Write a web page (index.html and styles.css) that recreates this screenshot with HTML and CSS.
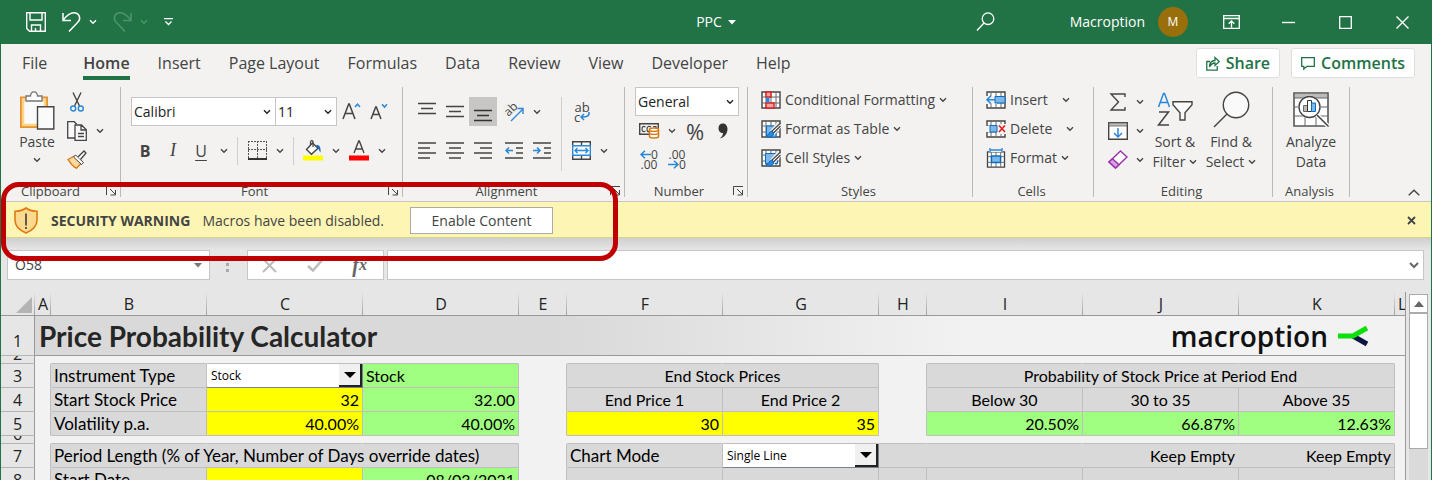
FILE: index.html
```html
<!DOCTYPE html>
<html lang="en">
<head>
<meta charset="utf-8">
<title>PPC</title>
<link rel="stylesheet" href="styles.css">
</head>
<body>
<svg class="defs" aria-hidden="true">
  <symbol id="chev" viewBox="0 0 8 6"><path d="M1 1.2 4 4.2 7 1.2" fill="none" stroke="currentColor" stroke-width="1.4"/></symbol>
  <symbol id="launch" viewBox="0 0 11 10"><path d="M.5 9V.5H10M4 3l5.500 5.500M9.500 4v5h-5" fill="none" stroke="currentColor"/></symbol>
  <symbol id="grid" viewBox="0 0 20 18"><path d="M1 1h18v16H1z" fill="#fff" stroke="#444" stroke-width="1.400"/><path d="M1 6h18M1 12h18M5 1v16M10 1v16M15 1v16" fill="none" stroke="#666"/></symbol>
  <symbol id="brush" viewBox="0 0 20 18"><path d="M19 4 11 13" stroke="#f3f2f1" stroke-width="6"/><path d="M19.500 3 11 11l1.500 2 7-7" fill="#fff" stroke="#444" stroke-width="1.200"/><path d="M11 11c-3 0-2.500 4-6 5 3 2 8 1 7.500-3z" fill="#2b88d8" stroke="#0f6cbd"/></symbol>
</svg>
<div class="window">
  <header class="titlebar">
    <div class="quick">
      <button aria-label="Save"><svg width="20" height="20" viewBox="0 0 20 20" fill="none" stroke="#fff" stroke-width="1.400"><path d="M.7.7h18.600v18.600H3.500L.7 16.500zM4 .7v7.300h12V.7M5.500 19v-6h9v6M9.500 19v-3"/></svg></button>
      <button aria-label="Undo"><svg width="19" height="20" viewBox="0 0 19 20" fill="none" stroke="#fff" stroke-width="1.500"><path d="M1 1v7.500h8M1 8.300C5 3 8 .8 12 .8c5 0 7.500 5.500 4 9.200L7 19.500"/></svg></button>
      <button aria-label="Undo list"><svg width="8" height="6"><use href="#chev"/></svg></button>
      <button class="dim" aria-label="Redo"><svg width="19" height="20" viewBox="0 0 19 20" fill="none" stroke="currentColor" stroke-width="1.500"><path d="M18 1v7.500h-8M18 8.300C14 3 11 .8 7 .8 2 .8-.5 6.300 3 10l9 9.500"/></svg></button>
      <button class="dim" aria-label="Redo list"><svg width="8" height="6"><use href="#chev"/></svg></button>
      <button aria-label="Customize"><svg width="9" height="8" viewBox="0 0 9 8" fill="none" stroke="#fff" stroke-width="1.300"><path d="M0 .7h9M1.500 3.500l3 3 3-3"/></svg></button>
    </div>
    <div class="doc">PPC <svg width="8" height="5"><path d="M0 0h8L4 4.500z" fill="#fff"/></svg></div>
    <div class="account">
      <button class="search" aria-label="Search"><svg width="19" height="20" viewBox="0 0 19 20" fill="none" stroke="#fff" stroke-width="1.300"><circle cx="12" cy="6.700" r="5.800"/><path d="M8 11 1 18.500"/></svg></button>
      <span>Macroption</span><span class="avatar">M</span>
      <button class="win" aria-label="Ribbon options"><svg width="17" height="14" viewBox="0 0 17 14" fill="none" stroke="#fff" stroke-width="1.300"><path d="M.7.700h15.600v12.600H.7zM.7 3.500h15.600M8.500 12.500v-6M5.700 8.800l2.800-2.800 2.800 2.800"/></svg></button>
      <button class="win" aria-label="Minimize"><svg width="13" height="14"><path d="M0 7.500h13" stroke="#fff" stroke-width="1.400"/></svg></button>
      <button class="win" aria-label="Maximize"><svg width="13" height="13"><path d="M.7.700h11.600v11.600H.7z" fill="none" stroke="#fff" stroke-width="1.300"/></svg></button>
      <button class="win" aria-label="Close"><svg width="13" height="13"><path d="M.5.500l12 12M12.500.500l-12 12" stroke="#fff" stroke-width="1.400"/></svg></button>
    </div>
  </header>

  <nav class="tabs">
    <button>File</button><button class="active">Home</button><button>Insert</button><button>Page Layout</button><button>Formulas</button><button>Data</button><button>Review</button><button>View</button><button>Developer</button><button>Help</button>
    <div class="actions">
      <button><svg width="14" height="15" viewBox="0 0 14 15" fill="none" stroke="currentColor" stroke-width="1.300"><path d="M4 5.500H.8v8.700h10.400V10M3.500 11c0-4 2-6.300 5.500-6.500V1.500l4.200 4-4.200 4V7C6.500 7 5 8 3.500 11z"/></svg>Share</button>
      <button><svg width="14" height="13" viewBox="0 0 14 13" fill="none" stroke="currentColor" stroke-width="1.300"><path d="M.7.700h12.600v8.600H6L2.800 12V9.300H.7z"/></svg>Comments</button>
    </div>
  </nav>

  <section class="ribbon">
    <div class="group clipboard">
      <div class="body">
        <button class="big"><svg width="35" height="39" viewBox="0 0 35 39"><path d="M1 6.500h26V36H1z" fill="#fff" stroke="#e8922d" stroke-width="2"/><path d="M3 9h22v25H3z" fill="#fafafa" stroke="#fbd48b" stroke-width="2.500"/><path d="M6 10V5h4.500c.5-5.500 6.500-5.500 7 0H22v5z" fill="#fff" stroke="#777" stroke-width="1.300"/><path d="M17.500 15.700h16.300V38H17.500z" fill="#fafafa" stroke="#444" stroke-width="1.400"/></svg><span>Paste</span><svg width="8" height="6"><use href="#chev"/></svg></button>
        <div class="stack">
          <div><button class="ic" aria-label="Cut"><svg width="14" height="20" viewBox="0 0 14 20" fill="none"><path d="M3 .5 9.500 14M11 .5 4.500 14" stroke="#444" stroke-width="1.400"/><circle cx="3.200" cy="16.500" r="2.500" stroke="#2b88d8" stroke-width="1.400"/><circle cx="10.800" cy="16.500" r="2.500" stroke="#2b88d8" stroke-width="1.400"/></svg></button></div>
          <div><button class="ic" aria-label="Copy"><svg width="20" height="20" viewBox="0 0 20 20" fill="#fafafa" stroke="#444" stroke-width="1.300"><path d="M8 17H.7V.700h6.500l2.500 2.500"/><path d="M8 4h6.500l4.800 4.800v10.500H8zM14 4v5h5M11 12.500h6M11 15.500h6"/></svg></button><button class="dd" aria-label="Copy options"><svg width="8" height="6"><use href="#chev"/></svg></button></div>
          <div><button class="ic" aria-label="Format Painter"><svg width="20" height="19" viewBox="0 0 20 19"><path d="M1 9.500 7.500 6l7 7-5 5.300c-1-.5-1.500-1.500-2.300-1.300L6 15.500c-.8 0-1.500-1-2-2z" fill="#fbd9a0" stroke="#d8760c" stroke-width="1.300"/><path d="m6.500 7 2-2 8 7.500-2 2z" fill="#fff" stroke="#444"/><path d="m11 7 6-6 2 2-5.500 6.500" fill="#fff" stroke="#444" stroke-width="1.300"/></svg></button></div>
        </div>
      </div>
      <div class="label"><span>Clipboard</span><button aria-label="Clipboard settings"><svg width="11" height="10"><use href="#launch"/></svg></button></div>
    </div>

    <div class="group font">
      <div class="body col">
        <div class="row">
          <div class="combo face"><select aria-label="Font"><option>Calibri</option></select><svg width="8" height="6"><use href="#chev"/></svg></div>
          <div class="combo size"><select aria-label="Font size"><option>11</option></select><svg width="8" height="6"><use href="#chev"/></svg></div>
          <button class="ic" aria-label="Increase font size"><svg width="19" height="18" viewBox="0 0 19 18" fill="none"><path d="M1 16 6.700 1h.6L13 16M3.200 10.500h7.600" stroke="#444" stroke-width="1.500"/><path d="m13 4 2.500-2.800L18 4" stroke="#2b88d8" stroke-width="1.500"/></svg></button>
          <button class="ic" aria-label="Decrease font size"><svg width="19" height="18" viewBox="0 0 19 18" fill="none"><path d="M1 16 5.700 4h.6L11 16M3 11.500h6" stroke="#444" stroke-width="1.500"/><path d="m12 1.200 2.500 2.800L17 1.200" stroke="#2b88d8" stroke-width="1.500"/></svg></button>
        </div>
        <div class="row">
          <button class="ic bold">B</button><button class="ic italic">I</button><button class="ic under">U</button><button class="dd" aria-label="Underline options"><svg width="8" height="6"><use href="#chev"/></svg></button>
          <i class="sep"></i>
          <button class="ic" aria-label="Borders"><svg width="19" height="19" viewBox="0 0 19 19" fill="none" stroke="#555"><path d="M0 .5h19M.5 0v17M18.500 0v17M9.500 0v17M0 8.500h19" stroke-dasharray="2 1"/><path d="M0 18h19" stroke="#333" stroke-width="2"/></svg></button><button class="dd" aria-label="Border options"><svg width="8" height="6"><use href="#chev"/></svg></button>
          <i class="sep"></i>
          <button class="ic" aria-label="Fill colour"><svg width="20" height="21" viewBox="0 0 20 21"><path d="M0 15.500h20v5H0z" fill="#ff0"/><path d="m3.500 9.500 6-6.500 5.500 5.200-6.500 6z" fill="#fff" stroke="#444" stroke-width="1.400"/><path d="M10 7V1.500C9.500 0 7.500.500 7.500 2v3" fill="none" stroke="#444" stroke-width="1.200"/><path d="M13 5c3.500-.5 5 2 4.500 7.500-1.500-1.500-1.700-3.500-2.500-4.500z" fill="#0f6cbd"/></svg></button><button class="dd" aria-label="Fill options"><svg width="8" height="6"><use href="#chev"/></svg></button>
          <button class="ic" aria-label="Font colour"><svg width="20" height="21" viewBox="0 0 20 21"><path d="M0 15.500h20v5H0z" fill="red"/><path d="m5 13 4.700-12h.6L15 13M6.700 9h6.600" fill="none" stroke="#444" stroke-width="1.400"/></svg></button><button class="dd" aria-label="Font colour options"><svg width="8" height="6"><use href="#chev"/></svg></button>
        </div>
      </div>
      <div class="label"><span>Font</span><button aria-label="Font settings"><svg width="11" height="10"><use href="#launch"/></svg></button></div>
    </div>

    <div class="group align">
      <div class="body">
        <div class="col">
          <div class="row">
            <button class="ic" aria-label="Top align"><svg width="18" height="17"><path d="M0 .5h18M3 5.500h12M0 10.500h18" stroke="#444" stroke-width="1.400"/></svg></button><button class="ic" aria-label="Middle align"><svg width="18" height="17"><path d="M0 3.500h18M3 8.500h12M0 13.500h18" stroke="#444" stroke-width="1.400"/></svg></button><button class="ic on" aria-label="Bottom align"><svg width="18" height="17"><path d="M0 7.500h18M3 12.500h12M0 17.500h18" stroke="#333" stroke-width="1.400"/></svg></button>
            <button class="ic gap" aria-label="Orientation"><svg class="tilt" width="20" height="20" viewBox="0 0 20 20" fill="none"><path d="m7 19 12-12M13.500 6.500h5.500V12" stroke="#2b88d8" stroke-width="1.400"/><text x="0" y="0" transform="translate(4.500 15) rotate(-45)" fill="#444">ab</text></svg></button><button class="dd" aria-label="Orientation options"><svg width="8" height="6"><use href="#chev"/></svg></button>
          </div>
          <div class="row">
            <button class="ic" aria-label="Align left"><svg width="18" height="17"><path d="M0 1h18M0 6h12M0 11h18M0 16h12" stroke="#444" stroke-width="1.400"/></svg></button><button class="ic" aria-label="Centre"><svg width="18" height="17"><path d="M0 1h18M3 6h12M0 11h18M3 16h12" stroke="#444" stroke-width="1.400"/></svg></button><button class="ic" aria-label="Align right"><svg width="18" height="17"><path d="M0 1h18M6 6h12M0 11h18M6 16h12" stroke="#444" stroke-width="1.400"/></svg></button>
            <button class="ic gap" aria-label="Decrease indent"><svg width="18" height="17" fill="none"><path d="M0 1h18M11 6h7M11 11h7M0 16h18" stroke="#444" stroke-width="1.400"/><path d="M8 8.500H1M4 5.500l-3 3 3 3" stroke="#2b88d8" stroke-width="1.500"/></svg></button><button class="ic" aria-label="Increase indent"><svg width="18" height="17" fill="none"><path d="M0 1h18M11 6h7M11 11h7M0 16h18" stroke="#444" stroke-width="1.400"/><path d="M0 8.500h7M4 5.500l3 3-3 3" stroke="#2b88d8" stroke-width="1.500"/></svg></button>
          </div>
        </div>
        <i class="sep tall"></i>
        <div class="col">
          <div class="row"><button class="ic wrap" aria-label="Wrap text"><span>ab</span><span>c<svg width="10" height="9" viewBox="0 0 10 9" fill="none" stroke="#2b88d8" stroke-width="1.500"><path d="M9 0c.5 4-2 5.500-8 5M4 2 1 5l3 3"/></svg></span></button></div>
          <div class="row"><button class="ic" aria-label="Merge"><svg width="19" height="19" viewBox="0 0 19 19" fill="#fafafa"><path d="M.7.700h17.600v17.600H.7zM9.500 0v5M9.500 14v5" stroke="#444" stroke-width="1.400"/><path d="M.7 4.700h17.600v9.600H.7z" stroke="#2b88d8" stroke-width="1.400"/><path d="M3 9.500h13M5.500 7 3 9.500 5.500 12M13.500 7 16 9.500 13.500 12" fill="none" stroke="#2b88d8" stroke-width="1.400"/></svg></button><button class="dd" aria-label="Merge options"><svg width="8" height="6"><use href="#chev"/></svg></button></div>
        </div>
      </div>
      <div class="label"><span>Alignment</span><button aria-label="Alignment settings"><svg width="11" height="10"><use href="#launch"/></svg></button></div>
    </div>

    <div class="group number">
      <div class="body col">
        <div class="combo format"><select aria-label="Number format"><option>General</option></select><svg width="8" height="6"><use href="#chev"/></svg></div>
        <div class="row">
          <button class="ic" aria-label="Accounting format"><svg width="20" height="17" viewBox="0 0 20 17" fill="none"><path d="M.7 1.700h18.600v10.600H.7z" stroke="#444" stroke-width="1.400"/><path d="M6.500 5C4 3.500 3 5 3 7s1 3.500 3.500 2M12 5c-2-1.500-4-.5-4 2s1 3.500 2.500 2M14 4.500h3v3" stroke="#444" stroke-width="1.200"/><path d="M10.500 7.500c0-2 9-2 9 0v7c0 2-9 2-9 0z" fill="#fff" stroke="#d8760c" stroke-width="1.500"/><path d="M10.500 8c0 1.800 9 1.800 9 0M10.500 11c0 1.800 9 1.800 9 0" stroke="#d8760c" stroke-width="1.400"/></svg></button><button class="dd" aria-label="Accounting options"><svg width="8" height="6"><use href="#chev"/></svg></button><button class="ic pct">%</button><button class="ic" aria-label="Comma style"><svg width="10" height="16" viewBox="0 0 10 16"><path d="M1.500 15.500C4 14 5 12.300 5 10 2.500 10.200.5 8 .5 5.200.5 2.500 2.300.5 4.800.5S9.500 2.500 9.500 6c0 5-3.500 8.800-8 9.500z" fill="#333"/></svg></button>
        </div>
        <div class="row">
          <button class="ic dec" aria-label="Increase decimal"><span><svg width="11" height="9" viewBox="0 0 11 9" fill="none" stroke="#2b88d8" stroke-width="1.500"><path d="M11 4.500H1M5 .7 1 4.500l4 3.800"/></svg>0</span><span>.00</span></button><button class="ic dec" aria-label="Decrease decimal"><span>.00</span><span><svg width="11" height="9" viewBox="0 0 11 9" fill="none" stroke="#2b88d8" stroke-width="1.500"><path d="M0 4.500h10M6 .7l4 3.800-4 3.800"/></svg>0</span></button>
        </div>
      </div>
      <div class="label"><span>Number</span><button aria-label="Number settings"><svg width="11" height="10"><use href="#launch"/></svg></button></div>
    </div>

    <div class="group styles">
      <div class="body list">
        <button><svg width="20" height="18" viewBox="0 0 20 18"><use href="#grid" width="20" height="18"/><path d="M5 1h5v5H5zM5 12h8v5H5z" fill="#f4a3a3" stroke="#e02020" stroke-width="1.400"/><path d="M5 6.500h3.500v5H5z" fill="#2b88d8"/></svg>Conditional Formatting<svg width="8" height="6"><use href="#chev"/></svg></button>
        <button><svg width="20" height="18" viewBox="0 0 20 18"><use href="#grid" width="20" height="18"/><path d="M5.500 6h9.500v11H5.500z" fill="#7db8ea" stroke="#0f6cbd"/><use href="#brush" width="20" height="18"/></svg>Format as Table<svg width="8" height="6"><use href="#chev"/></svg></button>
        <button><svg width="20" height="18" viewBox="0 0 20 18"><use href="#grid" width="20" height="18"/><path d="M4.500 4.500h12v10h-12z" fill="#7db8ea" stroke="#0f6cbd"/><use href="#brush" width="20" height="18"/></svg>Cell Styles<svg width="8" height="6"><use href="#chev"/></svg></button>
      </div>
      <div class="label"><span>Styles</span></div>
    </div>

    <div class="group cells">
      <div class="body list">
        <button><svg width="20" height="18" viewBox="0 0 20 18"><use href="#grid" width="20" height="18"/><path d="M0 5h11v8H0z" fill="#f3f2f1"/><path d="M9 5.500h10v6.500H9z" fill="#7db8ea" stroke="#0f6cbd"/><path d="M9 8.800H1M5 4.800 1 8.800l4 4" fill="none" stroke="#2b88d8" stroke-width="1.600"/></svg>Insert<svg class="far" width="8" height="6"><use href="#chev"/></svg></button>
        <button><svg width="20" height="18" viewBox="0 0 20 18"><use href="#grid" width="20" height="18"/><path d="M0 6h4v6H0zM11 4h9v10h-9z" fill="#f3f2f1"/><path d="M4 5.500h7v6.500H4z" fill="#7db8ea" stroke="#0f6cbd"/><path d="m13 5.500 6 6.500M19 5.500 13 12" stroke="#e02020" stroke-width="1.600"/></svg>Delete<svg class="far" width="8" height="6"><use href="#chev"/></svg></button>
        <button><svg width="20" height="20" viewBox="0 0 20 20"><use href="#grid" y="3" width="20" height="17"/><path d="M5.500 8h9v6.500h-9z" fill="#7db8ea" stroke="#0f6cbd" stroke-width="1.300"/><path d="M3 0h14v4H3z" fill="#f3f2f1"/><path d="M4 2h12M4 0v4M16 0v4" stroke="#2b88d8" stroke-width="1.400"/></svg>Format<svg width="8" height="6"><use href="#chev"/></svg></button>
      </div>
      <div class="label"><span>Cells</span></div>
    </div>

    <div class="group editing">
      <div class="body">
        <div class="stack">
          <div><button class="ic" aria-label="AutoSum"><svg width="16" height="18" viewBox="0 0 16 18" fill="none" stroke="#444" stroke-width="1.400"><path d="M15 4V1H1l7.500 8L1 17h14v-3"/></svg></button><button class="dd" aria-label="AutoSum options"><svg width="8" height="6"><use href="#chev"/></svg></button></div>
          <div><button class="ic" aria-label="Fill"><svg width="20" height="18" viewBox="0 0 20 18" fill="none"><path d="M.7.700h18.600v16.600H.7z" fill="#fff" stroke="#444" stroke-width="1.400"/><path d="M1 1h18v3H1z" fill="#bbb" stroke="#666" stroke-width=".8"/><path d="M10 6v9M6 11l4 4 4-4" stroke="#2b88d8" stroke-width="1.500"/></svg></button><button class="dd" aria-label="Fill options"><svg width="8" height="6"><use href="#chev"/></svg></button></div>
          <div><button class="ic" aria-label="Clear"><svg width="20" height="19" viewBox="0 0 20 19"><path d="M12.500 1 19 7 7.500 18 1 12z" fill="#fff" stroke="#9b2fae" stroke-width="1.400"/><path d="m4.500 8.700 6.500 6L7.500 18 1 12z" fill="#d8a0df" stroke="#9b2fae" stroke-width="1.400"/></svg></button><button class="dd" aria-label="Clear options"><svg width="8" height="6"><use href="#chev"/></svg></button></div>
        </div>
        <button class="big"><svg width="37" height="39" viewBox="0 0 37 39" fill="none" stroke-width="1.500"><path d="m1.500 16 5-13.500h1L12.500 16M3.300 11.500h7.500" stroke="#2b88d8"/><path d="M2 21h9.500L1.500 34H12" stroke="#444"/><path d="M16 10.700h19v3l-7 8V29h-5v-7.300l-7-8z" fill="#fafafa" stroke="#444" stroke-width="1.400"/></svg><span>Sort &amp;</span><span>Filter <svg width="8" height="6"><use href="#chev"/></svg></span></button>
        <button class="big"><svg width="37" height="39" viewBox="0 0 37 39"><circle cx="23" cy="14" r="12.700" fill="#fafafa" stroke="#444" stroke-width="1.400"/><path d="M14 23 1 36" stroke="#444" stroke-width="1.500"/></svg><span>Find &amp;</span><span>Select <svg width="8" height="6"><use href="#chev"/></svg></span></button>
      </div>
      <div class="label"><span>Editing</span></div>
    </div>

    <div class="group analysis">
      <div class="body">
        <button class="big"><svg width="36" height="39" viewBox="0 0 36 39" fill="none"><path d="M1 2h34v33H1z" fill="#fff" stroke="#555" stroke-width="1.600"/><path d="M2 3h32v4H2z" fill="#bbb"/><path d="M1 7h34M1 16h34M1 25h34M12 25v10M23 25v10" stroke="#666"/><circle cx="16.500" cy="16" r="11.500" fill="#fff"/><circle cx="16.500" cy="16" r="10.500" fill="#fff" stroke="#444" stroke-width="1.400"/><path d="m24 24 11 11" stroke="#fff" stroke-width="4"/><path d="m24 24 11 11" stroke="#444" stroke-width="1.600"/><path d="M10.500 14.500h4v6h-4z" fill="#bbb" stroke="#666"/><path d="M14.500 9.500h4v11h-4z" fill="#fff" stroke="#333"/><path d="M18.500 12h4v8.500h-4z" fill="#7db8ea" stroke="#0f6cbd"/></svg><span>Analyze</span><span>Data</span></button>
      </div>
      <div class="label"><span>Analysis</span></div>
    </div>
    <button class="collapse" aria-label="Collapse ribbon"><svg width="12" height="7"><path d="m.7 6.300 5.300-5 5.300 5" fill="none" stroke="#444" stroke-width="1.400"/></svg></button>
  </section>

  <section class="warning">
    <svg width="24" height="27" viewBox="0 0 24 27"><path d="M12 1c3 2.300 7 3.300 11 3.200V13c0 6.500-5 10.500-11 13C6 23.500 1 19.500 1 13V4.200C5 4.300 9 3.300 12 1z" fill="#fbd98d" stroke="#e07a12" stroke-width="1.600"/><path d="M12 6.500v12M12 20v2" stroke="#444" stroke-width="1.700"/></svg>
    <strong>SECURITY WARNING</strong><span>Macros have been disabled.</span>
    <button class="enable">Enable Content</button>
    <button class="close" aria-label="Close"><svg width="9" height="9"><path d="m1 1 7 7M8 1 1 8" stroke="#444" stroke-width="1.800"/></svg></button>
  </section>

  <section class="formula">
    <div class="namebox"><input aria-label="Name box" value="O58"><svg width="8" height="5"><path d="M0 0h8L4 4.500z" fill="#777"/></svg></div>
    <svg class="dots" width="4" height="9"><path d="M0 0h3v3H0zM0 6h3v3H0z" fill="#aaa"/></svg>
    <div class="fx">
      <button aria-label="Cancel"><svg width="16" height="15"><path d="m1 1 13 13M14 1 1 14" stroke="#bbb" stroke-width="2"/></svg></button>
      <button aria-label="Enter"><svg width="17" height="14"><path d="m1 8 5 4.500L16 1" fill="none" stroke="#bbb" stroke-width="2.600"/></svg></button>
      <button class="fn"><span>f</span>x</button>
    </div>
    <div class="entry"><input aria-label="Formula bar"><svg width="10" height="7" viewBox="0 0 10 7"><path d="m1 1 4 4 4-4" fill="none" stroke="#666" stroke-width="2"/></svg></div>
  </section>

  <main class="sheet">
    <div class="view">
      <table>
        <colgroup><col class="c-head"><col class="c-a"><col class="c-w"><col class="c-w"><col class="c-w"><col class="c-s"><col class="c-w"><col class="c-w"><col class="c-s"><col class="c-w"><col class="c-w"><col class="c-w"><col></colgroup>
        <thead><tr><th class="corner"><svg width="16" height="16"><path d="M16 0v16H0z" fill="#b4b4b4"/></svg></th><th>A</th><th>B</th><th>C</th><th>D</th><th>E</th><th>F</th><th>G</th><th>H</th><th>I</th><th>J</th><th>K</th><th class="last">L</th></tr></thead>
        <tbody>
          <tr class="top"><th>1</th><td colspan="12"><div class="banner"><h1>Price Probability Calculator</h1><div class="logo">macroption<svg width="31" height="22" viewBox="0 0 31 22" fill="none" stroke-width="5"><path d="m15 11 14 8" stroke="#0b1640"/><path d="M0 11h15L29 3" stroke="#0be00b"/></svg></div></div></td></tr>
          <tr class="thin"><th><div>2</div></th><td></td><td class="b"></td><td class="b"></td><td class="b"></td><td></td><td class="b"></td><td class="b"></td><td></td><td class="b"></td><td class="b"></td><td class="b"></td><td></td></tr>
          <tr><th>3</th><td class="r"></td><td class="g lab">Instrument Type</td><td class="ctl"><div class="pick"><select aria-label="Instrument Type"><option>Stock</option></select><i><svg width="12" height="6"><path d="M0 0h12L6 6z"/></svg></i></div></td><td class="gr">Stock</td><td class="r"></td><td class="g mid" colspan="2">End Stock Prices</td><td class="r"></td><td class="g mid" colspan="3">Probability of Stock Price at Period End</td><td></td></tr>
          <tr><th>4</th><td class="r"></td><td class="g lab">Start Stock Price</td><td class="y num">32</td><td class="gr num">32.00</td><td class="r"></td><td class="g mid">End Price 1</td><td class="g mid">End Price 2</td><td class="r"></td><td class="g mid">Below 30</td><td class="g mid">30 to 35</td><td class="g mid">Above 35</td><td></td></tr>
          <tr><th>5</th><td class="r"></td><td class="g lab">Volatility p.a.</td><td class="y num">40.00%</td><td class="gr num">40.00%</td><td class="r"></td><td class="y num">30</td><td class="y num">35</td><td class="r"></td><td class="gr num">20.50%</td><td class="gr num">66.87%</td><td class="gr num">12.63%</td><td></td></tr>
          <tr class="thin"><th><div>6</div></th><td></td><td class="b"></td><td class="b"></td><td class="b"></td><td></td><td class="b"></td><td class="b"></td><td class="b"></td><td class="b"></td><td class="b"></td><td class="b"></td><td></td></tr>
          <tr><th>7</th><td class="r"></td><td class="g lab" colspan="3">Period Length (% of Year, Number of Days override dates)</td><td class="r"></td><td class="g lab">Chart Mode</td><td class="ctl"><div class="pick"><select aria-label="Chart Mode"><option>Single Line</option></select><i><svg width="12" height="6"><path d="M0 0h12L6 6z"/></svg></i></div></td><td class="g open"></td><td class="g open"></td><td class="g open num">Keep Empty</td><td class="g num">Keep Empty</td><td></td></tr>
          <tr><th>8</th><td class="r"></td><td class="g lab">Start Date</td><td class="y"></td><td class="gr num">08/03/2021</td><td class="r"></td><td class="g"></td><td class="g"></td><td class="g"></td><td class="g"></td><td class="g"></td><td class="g"></td><td></td></tr>
        </tbody>
      </table>
    </div>
    <div class="scroll"><button aria-label="Scroll up"><svg width="10" height="6"><path d="M0 6h10L5 0z" fill="#666"/></svg></button><div class="thumb"></div></div>
  </main>
  <div class="callout"></div>
</div>
</body>
</html>
```
FILE: styles.css
```css
* { box-sizing: border-box; }
body { margin: 0; overflow: hidden; font: 14px/20px "Open Sans", "Noto Sans", sans-serif; color: #444; background: #e6e6e6; }
button { margin: 0; padding: 0; border: 0; background: none; font: inherit; color: inherit; display: flex; align-items: center; justify-content: center; }
select, input { font: inherit; color: inherit; border: 0; background: none; appearance: none; margin: 0; width: 100%; outline: 0; }
svg { display: block; flex: none; overflow: visible; }
.defs { position: absolute; width: 0; height: 0; }
.window { position: relative; height: 100vh; display: flex; flex-direction: column; border: solid #217346; border-width: 0 1px; overflow: hidden; }

.titlebar { flex: none; height: 44px; display: grid; grid-template-columns: 1fr auto 1fr; align-items: center; background: #217346; color: #fff; }
.quick { display: flex; align-items: center; gap: 16px; padding-left: 25px; }
.quick button:nth-child(3), .quick button:nth-child(5) { margin-left: -8px; }
.dim { color: #4f9470; }
.doc { display: flex; align-items: center; gap: 6px; }
.account { display: flex; align-items: center; justify-content: flex-end; }
.search { margin-right: 75px; }
.avatar { width: 30px; height: 30px; margin: 0 21px 0 13px; border-radius: 50%; background: #986f0b; font-size: 12px; line-height: 30px; text-align: center; }
.win { width: 57px; height: 44px; }
.avatar + .win { width: 44px; margin-right: 7px; }

.tabs { flex: none; height: 40px; display: flex; align-items: flex-start; background: #f3f2f1; padding: 4px 16px 0 21px; font-size: 16px; gap: 28px; }
.tabs > button { height: 32px; padding-top: 2px; border-bottom: 4px solid transparent; }
.tabs > button:first-child { margin-right: 8px; }
.tabs > .active { font-weight: 600; border-color: #217346; }
.actions { margin-left: auto; display: flex; gap: 11px; color: #217346; font-weight: 600; }
.actions button { height: 30px; padding: 0 9px; gap: 6px; background: #fff; border: 1px solid #e1dfdd; border-radius: 3px; }

.ribbon { flex: none; height: 118px; display: flex; background: #f3f2f1; padding-top: 3px; border-bottom: 1px solid #c8c6c4; }
.group { flex: none; height: 110px; display: flex; flex-direction: column; border-right: 1px solid #bbb9b7; }
.body { flex: 1; min-height: 0; display: flex; align-items: flex-start; padding-left: 10px; }
.col { display: flex; flex-direction: column; }
.row { display: flex; align-items: center; }
.label { flex: none; display: flex; align-items: center; height: 12px; padding-right: 3px; font-size: 13px; line-height: 12px; }
.label span { flex: 1; text-align: center; }
.clipboard { width: 120px; }
.clipboard .label { padding-left: 8px; }
.clipboard .label span { flex: none; margin-right: auto; padding-left: 12px; }
.clipboard .label { padding-left: 8px; }
.font { width: 282px; }
.align { width: 222px; }
.number { width: 123px; }
.styles { width: 225px; }
.cells { width: 121px; }
.editing { width: 179px; }
.analysis { width: 77px; }
.ic { width: 28px; height: 29px; }
.dd { width: 18px; height: 29px; }
.gap { margin-left: 3px; }
.on { background: #c8c6c4; }
.sep { width: 1px; height: 28px; margin: 0 5px 0 4px; background: #d0cecc; }
.big { flex-direction: column; justify-content: flex-start; width: 56px; padding-top: 4px; }
.big > svg:first-child { margin-bottom: 2px; }
.big > svg:last-child { margin-top: 5px; }
.big span { display: flex; align-items: center; gap: 4px; white-space: nowrap; }
.stack > div { display: flex; height: 29px; }
.clipboard .body { padding-left: 8px; }
.clipboard .stack { margin-left: -2px; }
.font .body { padding-top: 10px; gap: 10px; }
.align .body { padding-top: 10px; }
.align .col { gap: 10px; }
.align .tall { height: 74px; margin-left: 5px; }
.tilt { font-size: 12px; }
.combo { display: flex; align-items: center; height: 29px; padding: 0 4px 0 2px; border: 1px solid #c8c6c4; background: #fff; color: #222; }
.face { width: 145px; }
.size { width: 62px; margin: 0 0 0 -1px; }
.format { width: 104px; }
.bold { font-size: 16px; font-weight: 700; }
.italic { font: italic 18px "Liberation Serif", serif; }
.under { font-size: 16px; text-decoration: underline; text-underline-offset: 3px; }
.wrap, .dec { flex-direction: column; font-size: 12px; line-height: 10px; }
.wrap span, .dec span { display: flex; align-items: center; height: 10px; }
.wrap { font-size: 13px; padding-left: 2px; }
.pct { font-size: 22px; }
.list { flex-direction: column; padding-left: 13px; }
.list button { height: 29px; gap: 4px; white-space: nowrap; }
.body.list { margin-top: -2px; }
.list .far { margin-left: 10px; }
.editing .dd { width: 15px; }
.analysis .body { padding-left: 10px; }
.collapse { margin: 0 11px 5px auto; align-self: flex-end; }

.warning { flex: none; height: 36px; display: flex; align-items: center; background: #fdf5b4; border-bottom: 1px solid #d8d38a; padding: 2px 15px 0 13px; }
.warning strong { font-weight: 700; margin: 0 12px 0 13px; }
.enable { width: 143px; height: 27px; margin-left: 26px; background: #fff; border: 1px solid #ababab; }
.close { margin-left: auto; }

.formula { flex: none; height: 54px; display: flex; align-items: flex-start; padding: 12px 7px 0 6px; background: linear-gradient(#cfcfcf, #e6e6e6 12px); }
.namebox, .fx, .entry { height: 30px; display: flex; align-items: center; background: #fff; border: 1px solid #c6c6c6; padding: 0 7px; }
.namebox { width: 203px; }
.namebox input { padding: 0; }
.dots { margin: 13px 17px 0 16px; }
.fx { width: 137px; justify-content: space-between; padding: 0 16px 0 14px; }
.fn { font: italic bold 16px "Liberation Serif", serif; color: #666; }
.fn span { font-size: 20px; }
.entry { flex: 1; margin-left: 3px; padding-right: 4px; }

.sheet { flex: 1; min-height: 0; display: flex; overflow: hidden; background: #e6e6e6; }
.view { flex: 1; min-width: 0; overflow: hidden; background: #f2f2f2; color: #000; font: 16px/20px Lato, "Open Sans", sans-serif; border-right: 1px solid #999; }
table { width: 100%; table-layout: fixed; border-spacing: 0; border-collapse: separate; }
.c-head { width: 34px; }
.c-a { width: 16px; }
.c-w { width: 156px; }
.c-s { width: 48px; }
th { padding: 0; font: 16px/20px "Open Sans", sans-serif; background: #e6e6e6; color: #222; }
thead th { height: 24px; border-bottom: 1px solid #999; background: linear-gradient(#e6e6e6, #a0a0a0) right / 1px 100% no-repeat #e6e6e6; }
thead .last { background: #e6e6e6; text-align: left; padding-left: 3px; overflow: hidden; }
.corner svg { margin-left: 15px; margin-top: 3px; }
tbody th { border-right: 1px solid #999; border-bottom: 1px solid #b4b4b4; }
td { height: 24px; padding: 0 3px; border: solid transparent; border-width: 0 1px 1px 0; white-space: nowrap; overflow: hidden; }
.top th { vertical-align: bottom; padding-bottom: 4px; }
.top td { height: 40px; border-bottom-color: #999; border-right: 0; background: linear-gradient(to right, #d9d9d9 38%, #f2f2f2 68%); }
.banner { display: flex; align-items: center; justify-content: space-between; padding: 0 33px 0 1px; }
h1 { margin: 0; font-size: 28px; line-height: 36px; font-weight: 700; color: #262626; }
.logo { display: flex; align-items: center; gap: 10px; font: 600 28px/36px "Open Sans", sans-serif; color: #111; }
.thin th, .thin td { height: 8px; line-height: 0; }
.thin div { height: 7px; display: flex; justify-content: center; align-items: flex-end; overflow: hidden; line-height: 18px; }
.b { border-bottom-color: #bfbfbf; }
.r { border-right-color: #bfbfbf; }
.g, .y, .gr { border-color: #bfbfbf; }
.g { background: #d9d9d9; }
.y { background: #ff0; }
.gr { background: #a0ff80; }
.open { border-right-color: #d9d9d9; }
.lab { font-size: 17px; }
.num { text-align: right; }
.mid { text-align: center; }
.ctl { padding: 0; border-color: #7a7f8c; }
.pick { height: 23px; display: flex; background: #fff; }
.pick select { padding-left: 4px; font: 12px "Open Sans", sans-serif; color: #000; }
.pick i { flex: none; width: 23px; display: flex; align-items: center; justify-content: center; background: #f0f0f0; border: solid #222; border-width: 0 2px 2px 0; }
.scroll { flex: none; width: 19px; margin: 2px 3px 0; background: #dadada; }
.scroll button { width: 100%; height: 19px; background: #fff; border: 1px solid #ababab; }
.thumb { height: 136px; background: #fff; border: 1px solid #ababab; }
.callout { position: absolute; left: 0; top: 182px; width: 617px; height: 79px; border: 5px solid #c00000; border-radius: 18px; pointer-events: none; }
```
